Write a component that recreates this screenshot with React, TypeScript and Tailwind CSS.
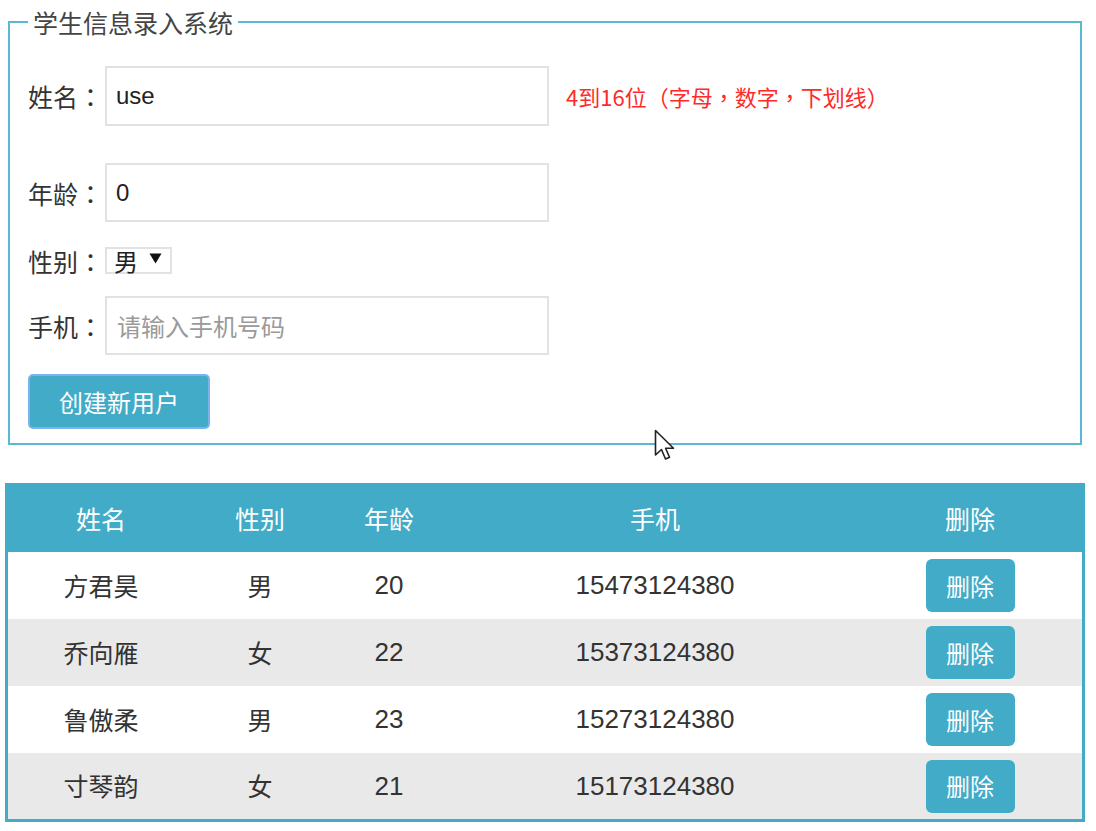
import React from "react";

const rows = [
  { name: "方君昊", sex: "男", age: 20, phone: "15473124380" },
  { name: "乔向雁", sex: "女", age: 22, phone: "15373124380" },
  { name: "鲁傲柔", sex: "男", age: 23, phone: "15273124380" },
  { name: "寸琴韵", sex: "女", age: 21, phone: "15173124380" },
];

function P({ c }: { c: string }) {
  return <span className="font-['Noto_Sans_CJK_TC',sans-serif]">{c}</span>;
}

function Label({ text }: { text: string }) {
  return (
    <label className="w-[77px] text-[25px] leading-[30px] text-[#333]">
      {text}
      <P c="：" />
    </label>
  );
}

export default function App() {
  return (
    <div className="relative w-[1096px] h-[831px] bg-white text-[#333] font-['Noto_Sans_CJK_SC','Noto_Sans',sans-serif]">
      <div className="pt-[8px] pl-[8px]">
        <fieldset className="w-[1074px] border-2 border-[#5ab9d0] pl-[18px] pb-[14px]">
          <legend className="px-[5px] text-[25px] leading-[28px] text-[#444]">学生信息录入系统</legend>
          <div className="flex items-center mt-[30px] h-[60px]">
            <Label text="姓名" />
            <div className="w-[444px] h-[60px] border-2 border-[#e2e2e2] flex items-center px-[9px] text-[24px] font-['Liberation_Sans',sans-serif] text-[#222]">use</div>
            <span className="ml-[17px] text-[22px] leading-[30px] text-[#ff2a2a]">
              4到16位<P c="（" />字母<P c="，" />数字<P c="，" />下划线<P c="）" />
            </span>
          </div>
          <div className="flex items-center mt-[37px] h-[59px]">
            <Label text="年龄" />
            <div className="w-[444px] h-[59px] border-2 border-[#e2e2e2] flex items-center px-[9px] text-[24px] font-['Liberation_Sans',sans-serif] text-[#222]">0</div>
          </div>
          <div className="flex items-center mt-[25px] h-[27px]">
            <Label text="性别" />
            <div className="w-[67px] h-[27px] border-2 border-[#e2e2e2] flex items-center pl-[7px] text-[24px] leading-[24px] text-[#222]">
              <span>男</span>
              <svg width="13" height="11" viewBox="0 0 13 11" className="ml-[11px] -mt-[4px]">
                <path d="M0.5 0.5 L12.5 0.5 L6.5 10.5 Z" fill="#111" />
              </svg>
            </div>
          </div>
          <div className="flex items-center mt-[22px] h-[59px]">
            <Label text="手机" />
            <div className="w-[444px] h-[59px] border-2 border-[#e2e2e2] flex items-center px-[10px] text-[24px] text-[#9a9a9a]">请输入手机号码</div>
          </div>
          <button className="mt-[19px] w-[182px] h-[55px] rounded-[5px] bg-[#42abc7] border-2 border-[#7db2ee] text-white text-[24px] leading-[30px]">创建新用户</button>
        </fieldset>
      </div>

      <div className="ml-[5px] mt-[38px] w-[1080px] border-[3px] border-[#42abc7]">
        <div className="grid grid-cols-[186px_132px_126px_406px_1fr] h-[66px] bg-[#42abc7] text-white text-[25px] items-center text-center">
          <div>姓名</div>
          <div>性别</div>
          <div>年龄</div>
          <div>手机</div>
          <div>删除</div>
        </div>
        {rows.map((r, i) => (
          <div
            key={r.phone}
            className={`grid grid-cols-[186px_132px_126px_406px_1fr] ${i === 3 ? "h-[66px]" : "h-[67px]"} items-center text-center text-[25px] ${i % 2 === 1 ? "bg-[#e9e9e9]" : "bg-white"}`}
          >
            <div>{r.name}</div>
            <div>{r.sex}</div>
            <div className="font-['Liberation_Sans',sans-serif] text-[26px]">{r.age}</div>
            <div className="font-['Liberation_Sans',sans-serif] text-[26px]">{r.phone}</div>
            <div className="flex justify-center">
              <button className="w-[89px] h-[53px] rounded-[6px] bg-[#42abc7] text-white text-[24px]">删除</button>
            </div>
          </div>
        ))}
      </div>

      <svg className="absolute left-[654px] top-[429px]" width="24" height="36" viewBox="0 0 24 36">
        <path d="M1.5 1.5 L1.5 26 L7.5 20.5 L11.5 30 L15.5 28.3 L11.6 19.2 L19.5 19.2 Z" fill="#fff" stroke="#222" strokeWidth="1.6" strokeLinejoin="round" />
      </svg>
    </div>
  );
}
